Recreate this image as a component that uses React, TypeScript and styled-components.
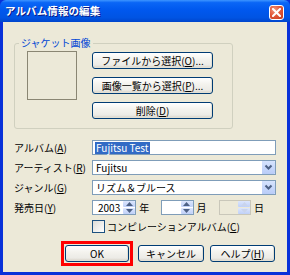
import styled, { createGlobalStyle } from "styled-components";

const GlobalStyle = createGlobalStyle`
  html, body {
    margin: 0;
    padding: 0;
    background: #ffffff;
  }
  * {
    box-sizing: border-box;
  }
`;

const Mn = ({ children }: { children: string }) => <u>{children}</u>;

const Arrow = ({ up, disabled }: { up?: boolean; disabled?: boolean }) => (
  <svg width="7" height="4" viewBox="0 0 7 4">
    <polygon
      points={up ? "0,4 3.5,0 7,4" : "0,0 3.5,4 7,0"}
      fill={disabled ? "#C9D4EC" : "#4D6185"}
    />
  </svg>
);

const Chevron = () => (
  <svg width="9" height="7" viewBox="0 0 9 7">
    <polyline
      points="1.5,1.5 4.5,4.5 7.5,1.5"
      fill="none"
      stroke="#4D6185"
      strokeWidth="2"
    />
  </svg>
);

const App = () => {
  return (
    <>
      <GlobalStyle />
      <Window>
        <TitleBar>
          <Title>アルバム情報の編集</Title>
          <CloseButton>
            <svg width="9" height="9" viewBox="0 0 9 9">
              <path d="M1 1 L8 8 M8 1 L1 8" stroke="#fff" strokeWidth="2" strokeLinecap="square" />
            </svg>
          </CloseButton>
        </TitleBar>
        <Client>
          <Group>
            <Legend>ジャケット画像</Legend>
            <GroupRow>
              <Picture />
              <ButtonStack>
                <Button $width={121}>
                  ファイルから選択(<Mn>O</Mn>)...
                </Button>
                <Button $width={121}>
                  画像一覧から選択(<Mn>P</Mn>)...
                </Button>
                <Button $width={121}>
                  削除(<Mn>D</Mn>)
                </Button>
              </ButtonStack>
            </GroupRow>
          </Group>

          <Form>
            <Label>
              アルバム(<Mn>A</Mn>)
            </Label>
            <TextBox>
              <Selected>Fujitsu Test</Selected>
            </TextBox>

            <Label>
              アーティスト(<Mn>R</Mn>)
            </Label>
            <Combo>
              <ComboText>Fujitsu</ComboText>
              <DropButton>
                <Chevron />
              </DropButton>
            </Combo>

            <Label>
              ジャンル(<Mn>G</Mn>)
            </Label>
            <Combo>
              <ComboText>リズム＆ブルース</ComboText>
              <DropButton>
                <Chevron />
              </DropButton>
            </Combo>

            <Label>
              発売日(<Mn>Y</Mn>)
            </Label>
            <DateRow>
              <Spin $width={45}>
                <SpinValue>2003</SpinValue>
                <SpinButtons>
                  <SpinHalf><Arrow up /></SpinHalf>
                  <SpinHalf><Arrow /></SpinHalf>
                </SpinButtons>
              </Spin>
              <Unit>年</Unit>
              <Spin $width={33}>
                <SpinValue />
                <SpinButtons>
                  <SpinHalf><Arrow up /></SpinHalf>
                  <SpinHalf><Arrow /></SpinHalf>
                </SpinButtons>
              </Spin>
              <Unit>月</Unit>
              <Spin $width={33} $disabled>
                <SpinValue />
                <SpinButtons $disabled>
                  <SpinHalf><Arrow up disabled /></SpinHalf>
                  <SpinHalf><Arrow disabled /></SpinHalf>
                </SpinButtons>
              </Spin>
              <Unit>日</Unit>
            </DateRow>

            <span />
            <CheckRow>
              <CheckBox />
              <span>
                コンピレーションアルバム(<Mn>C</Mn>)
              </span>
            </CheckRow>
          </Form>

          <Footer>
            <Highlight>
              <Button $width={64}>OK</Button>
            </Highlight>
            <Button $width={66}>キャンセル</Button>
            <Button $width={65}>
              ヘルプ(<Mn>H</Mn>)
            </Button>
          </Footer>
        </Client>
      </Window>
    </>
  );
};

export default App;

const Window = styled.div`
  width: 290px;
  height: 275px;
  display: flex;
  flex-direction: column;
  background: #0831d9;
  font-family: "Noto Sans CJK JP", "Liberation Sans", sans-serif;
  font-size: 10px;
  line-height: 12px;
  color: #000;
`;

const TitleBar = styled.div`
  height: 22px;
  flex: none;
  display: flex;
  align-items: center;
  justify-content: space-between;
  padding: 0 6px 0 5px;
  background: linear-gradient(
    #3d95ff 0%,
    #0a66f6 12%,
    #0058ee 45%,
    #0054e3 80%,
    #0045cc 100%
  );
  border-radius: 6px 6px 0 0;
`;

const Title = styled.span`
  color: #fff;
  font-weight: bold;
  font-size: 10.5px;
  letter-spacing: 0.1px;
  text-shadow: 1px 1px 0 #0a1883;
`;

const CloseButton = styled.div`
  width: 15px;
  height: 15px;
  margin-top: 2px;
  display: flex;
  align-items: center;
  justify-content: center;
  border: 1px solid #fff;
  border-radius: 3px;
  background: radial-gradient(circle at 35% 30%, #f09a80 0%, #e2583a 45%, #c43a1c 100%);
`;

const Client = styled.div`
  flex: 1;
  margin: 0 3px 3px;
  padding: 15px 11px 0;
  background: #ece9d8;
  display: flex;
  flex-direction: column;
`;

const Group = styled.fieldset`
  width: 219px;
  margin: 0;
  padding: 3px 18px 9px 12px;
  border: 1px solid #d0d0bf;
  border-radius: 3px;
`;

const Legend = styled.legend`
  margin-left: -8px;
  padding: 0 2px;
  color: #0046d5;
  line-height: 12px;
`;

const GroupRow = styled.div`
  display: flex;
  gap: 15px;
`;

const Picture = styled.div`
  width: 50px;
  height: 49px;
  flex: none;
  margin-top: -1px;
  border: 1px solid #8a8673;
  background: #ece9d8;
`;

const ButtonStack = styled.div`
  display: flex;
  flex-direction: column;
  gap: 8px;
`;

const Button = styled.div<{ $width: number }>`
  width: ${(p) => p.$width}px;
  height: 17px;
  display: flex;
  align-items: center;
  justify-content: center;
  border: 1px solid #003c74;
  border-radius: 3px;
  background: linear-gradient(#ffffff 0%, #f4f3ee 40%, #ecebe6 80%, #d6d0c5 100%);
  box-shadow: inset -1px -1px 0 #e3e0d4;
  white-space: nowrap;
`;

const Form = styled.div`
  margin-top: 11px;
  display: grid;
  grid-template-columns: 78px 184px;
  grid-template-rows: 15px 15px 15px 15px 13px;
  row-gap: 5px;
  align-items: center;
`;

const Label = styled.span`
  white-space: nowrap;
`;

const TextBox = styled.div`
  height: 15px;
  display: flex;
  align-items: center;
  padding-left: 2px;
  border: 1px solid #7f9db9;
  background: #fff;
`;

const Selected = styled.span`
  background: #316ac5;
  color: #fff;
  padding: 0 1px;
  line-height: 12px;
`;

const Combo = styled.div`
  height: 15px;
  display: flex;
  border: 1px solid #7f9db9;
  background: #fff;
`;

const ComboText = styled.span`
  flex: 1;
  padding-left: 3px;
  line-height: 13px;
`;

const DropButton = styled.div`
  width: 14px;
  margin: 0;
  display: flex;
  align-items: center;
  justify-content: center;
  border-left: 1px solid #fff;
  background: linear-gradient(#d6e3fd, #b9ccf8);
  border-radius: 1px;
`;

const DateRow = styled.div`
  display: flex;
  align-items: center;
  height: 15px;
`;

const Spin = styled.div<{ $width: number; $disabled?: boolean }>`
  width: ${(p) => p.$width}px;
  height: 15px;
  display: flex;
  border: 1px solid ${(p) => (p.$disabled ? "#c9c7ba" : "#7f9db9")};
  background: ${(p) => (p.$disabled ? "#ece9d8" : "#fff")};
`;

const SpinValue = styled.span`
  flex: 1;
  text-align: right;
  padding-right: 3px;
  line-height: 13px;
`;

const SpinButtons = styled.div<{ $disabled?: boolean }>`
  width: 12px;
  display: flex;
  flex-direction: column;
  gap: 1px;
  background: ${(p) => (p.$disabled ? "#ece9d8" : "#fff")};
`;

const SpinHalf = styled.div`
  flex: 1;
  display: flex;
  align-items: center;
  justify-content: center;
  background: linear-gradient(#dce6fd, #bfd0f8);
  border-radius: 1px;
`;

const Unit = styled.span`
  margin: 0 12px 0 3px;
`;

const CheckRow = styled.label`
  display: flex;
  align-items: center;
  gap: 2px;
  white-space: nowrap;
`;

const CheckBox = styled.span`
  width: 13px;
  height: 13px;
  border: 1px solid #1c5180;
  background: linear-gradient(135deg, #dcdcd7, #ffffff);
`;

const Footer = styled.div`
  margin-top: 8px;
  margin-right: 1px;
  display: flex;
  justify-content: flex-end;
  align-items: center;
  gap: 6px;
`;

const Highlight = styled.div`
  border: 3px solid #ff0000;
  padding: 1px;
  margin-right: -1px;
`;
